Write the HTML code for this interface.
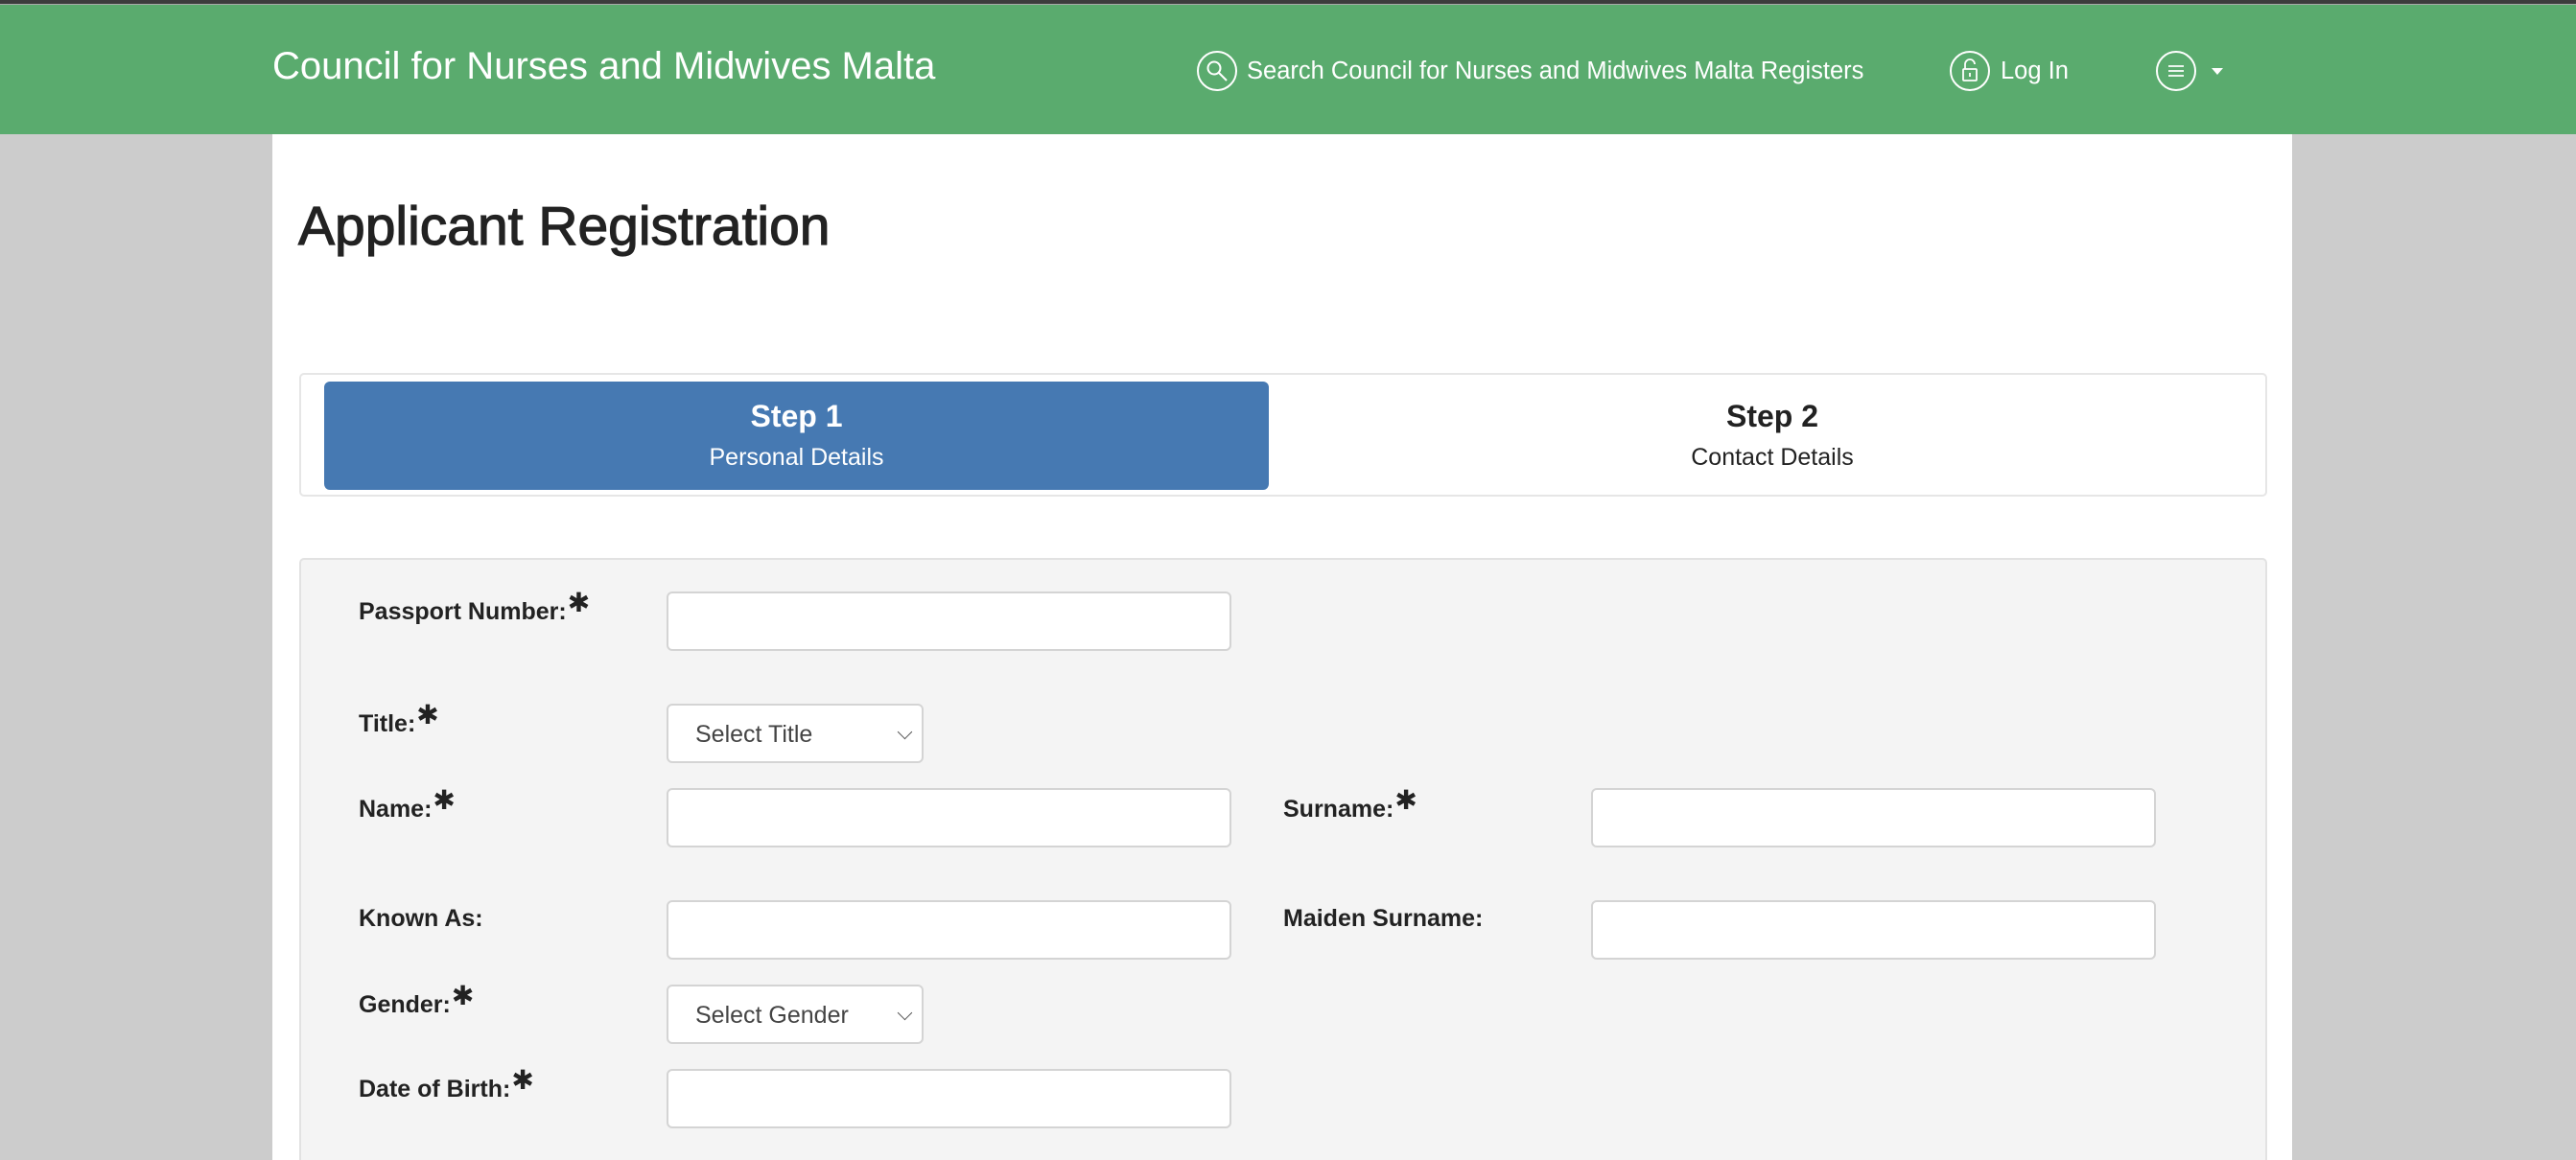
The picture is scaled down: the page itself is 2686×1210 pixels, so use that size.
<!DOCTYPE html>
<html style="width:2686px;height:1210px;overflow:hidden"><head><meta charset="utf-8"><style>
*{box-sizing:border-box;margin:0;padding:0}
body{width:2686px;height:1210px;overflow:hidden;background:#cccccc;font-family:"Liberation Sans",Arial,sans-serif;position:relative}
.a{position:absolute}
.top{left:0;top:0;width:2686px;height:5px;background:#3c3c3c;border-bottom:1px solid #aaa}
.hdr{left:0;top:5px;width:2686px;height:135px;background:#5aab6e}
.wt{color:#fff}
.main{left:284px;top:140px;width:2106px;height:1070px;background:#fff}
.lbl{font-weight:bold;font-size:25px;color:#222;white-space:nowrap}
.lbl b{font-family:"DejaVu Sans",sans-serif;font-size:28px;position:relative;top:-8px;margin-left:1px}
.inp{background:#fff;border:2px solid #d4d4d4;border-radius:6px}
.sel{font-size:25px;color:#444;padding:16px 0 0 28px}
.sel:after{content:"";position:absolute;right:12px;top:22px;width:10px;height:10px;border-right:1.5px solid #555;border-bottom:1.5px solid #555;transform:rotate(45deg)}
.circ{border:2px solid #fff;border-radius:50%;width:42px;height:42px}
</style></head><body>
<div class="a top"></div>
<div class="a hdr"></div>
<div class="a wt" style="left:284px;top:47px;font-size:40px">Council for Nurses and Midwives Malta</div>
<div class="a circ" style="left:1248px;top:53px"><svg width="38" height="38" style="position:absolute;left:0;top:0"><circle cx="16" cy="16" r="6.5" fill="none" stroke="#fff" stroke-width="2"/><line x1="21" y1="21" x2="29" y2="29" stroke="#fff" stroke-width="2"/></svg></div>
<div class="a wt" style="left:1300px;top:60px;font-size:25.5px">Search Council for Nurses and Midwives Malta Registers</div>
<div class="a circ" style="left:2033px;top:53px"><svg width="38" height="38" style="position:absolute;left:0;top:0"><path d="M14 17v-5a5 5 0 0 1 10 0" fill="none" stroke="#fff" stroke-width="1.8"/><rect x="12" y="17" width="14" height="12" rx="1" fill="none" stroke="#fff" stroke-width="1.8"/><line x1="19" y1="21" x2="19" y2="25" stroke="#fff" stroke-width="1.8"/></svg></div>
<div class="a wt" style="left:2086px;top:60px;font-size:25.5px">Log In</div>
<div class="a circ" style="left:2248px;top:53px"><svg width="38" height="38" style="position:absolute;left:0;top:0"><path d="M11 14h16M11 19h16M11 24h16" stroke="#fff" stroke-width="1.8"/></svg></div>
<div class="a" style="left:2306px;top:71px;border-left:6px solid transparent;border-right:6px solid transparent;border-top:7px solid #fff"></div>
<div class="a main"></div>
<div class="a" style="left:311px;top:203px;font-size:57px;color:#222;-webkit-text-stroke:1.2px #222">Applicant Registration</div>
<div class="a" style="left:312px;top:389px;width:2052px;height:129px;border:2px solid #e6e6e6;border-radius:5px;background:#fff"></div>
<div class="a" style="left:338px;top:398px;width:985px;height:113px;background:#4679b2;border-radius:6px;color:#fff;text-align:center">
<div style="font-size:32px;font-weight:bold;margin-top:18px">Step 1</div><div style="font-size:25px;margin-top:10px">Personal Details</div></div>
<div class="a" style="left:1323px;top:398px;width:1050px;height:113px;color:#222;text-align:center">
<div style="font-size:32px;font-weight:bold;margin-top:18px">Step 2</div><div style="font-size:25px;margin-top:10px">Contact Details</div></div>
<div class="a" style="left:312px;top:582px;width:2052px;height:628px;background:#f4f4f4;border:2px solid #e2e2e2;border-bottom:none;border-radius:5px 5px 0 0"></div>
<div class="a lbl" style="left:374px;top:620px">Passport Number:<b>✱</b></div>
<div class="a inp" style="left:695px;top:617px;width:589px;height:62px"></div>
<div class="a lbl" style="left:374px;top:737px">Title:<b>✱</b></div>
<div class="a inp sel" style="left:695px;top:734px;width:268px;height:62px">Select Title</div>
<div class="a lbl" style="left:374px;top:826px">Name:<b>✱</b></div>
<div class="a inp" style="left:695px;top:822px;width:589px;height:62px"></div>
<div class="a lbl" style="left:1338px;top:826px">Surname:<b>✱</b></div>
<div class="a inp" style="left:1659px;top:822px;width:589px;height:62px"></div>
<div class="a lbl" style="left:374px;top:944px">Known As:</div>
<div class="a inp" style="left:695px;top:939px;width:589px;height:62px"></div>
<div class="a lbl" style="left:1338px;top:944px">Maiden Surname:</div>
<div class="a inp" style="left:1659px;top:939px;width:589px;height:62px"></div>
<div class="a lbl" style="left:374px;top:1030px">Gender:<b>✱</b></div>
<div class="a inp sel" style="left:695px;top:1027px;width:268px;height:62px">Select Gender</div>
<div class="a lbl" style="left:374px;top:1118px">Date of Birth:<b>✱</b></div>
<div class="a inp" style="left:695px;top:1115px;width:589px;height:62px"></div>
</body></html>
